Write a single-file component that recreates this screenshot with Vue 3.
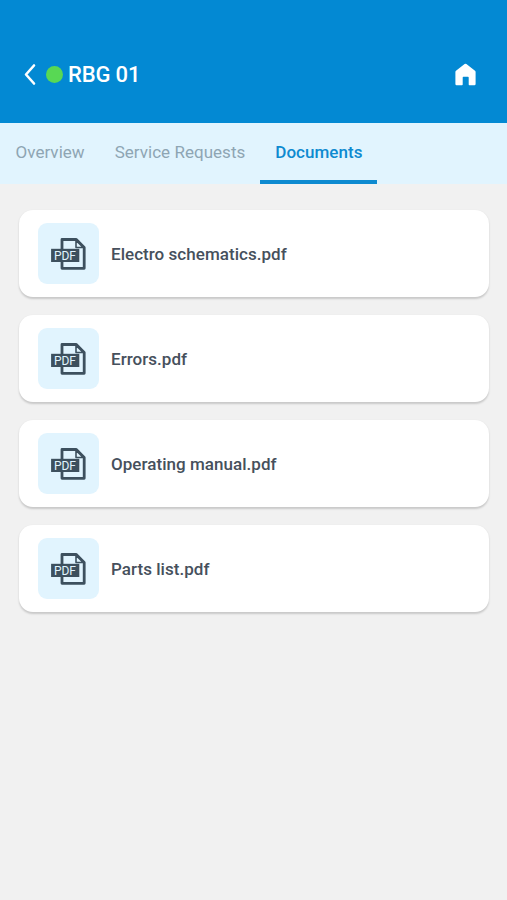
<script setup>
const tabs = [
  { label: 'Overview', active: false },
  { label: 'Service Requests', active: false },
  { label: 'Documents', active: true },
]
const documents = ['Electro schematics.pdf', 'Errors.pdf', 'Operating manual.pdf', 'Parts list.pdf']
</script>

<template>
  <div class="screen">
    <header class="header">
      <svg class="back" width="14" height="24" viewBox="0 0 14 24">
        <path d="M11 2.5L3 11.5l8 9" fill="none" stroke="#fff" stroke-width="2.6" stroke-linecap="round" stroke-linejoin="round" />
      </svg>
      <span class="status"></span>
      <h1 class="title">RBG 01</h1>
      <svg class="home" width="22" height="24" viewBox="0 0 22 24">
        <path d="M2 7.8L10.6 1q.9-.6 1.8 0L21 7.8q.6.5.6 1.3v12q0 1.2-1.2 1.2h-5q-.7 0-.7-.7v-7.2q0-.7-.7-.7H9.4q-.7 0-.7.7v7.2q0 .7-.7.7H2.6q-1.2 0-1.2-1.2v-12q0-.8.6-1.3z" fill="#fff" />
      </svg>
    </header>
    <nav class="tabs">
      <button v-for="tab in tabs" :key="tab.label" class="tab" :class="{ active: tab.active }">{{ tab.label }}</button>
    </nav>
    <main class="list">
      <article v-for="name in documents" :key="name" class="card">
        <div class="tile">
          <svg width="61" height="61" viewBox="0 0 61 61">
            <path d="M24 26.5V16.5h14.3l7.9 8v20.8H24V39" class="page" />
            <path d="M38 17.5v7h7.2z" class="fold" />
            <rect x="13.1" y="25.8" width="28.2" height="13.2" class="label" />
            <text x="15.9" y="36.7" class="pdf">PDF</text>
          </svg>
        </div>
        <span class="name">{{ name }}</span>
      </article>
    </main>
  </div>
</template>

<style>
body {
  background: #f1f1f1;
}
</style>

<style scoped>
.screen {
  min-height: 900px;
  background: #f1f1f1;
  font-family: Roboto, sans-serif;
}
.header {
  box-sizing: border-box;
  height: 123px;
  padding: 27px 31px 0 23px;
  display: flex;
  align-items: center;
  background: #0389d3;
}
.back {
  margin-right: 9px;
}
.status {
  width: 17px;
  height: 17px;
  margin-bottom: 1px;
  border-radius: 50%;
  background: #58d854;
}
.title {
  margin: 0 auto 0 5px;
  font-size: 22px;
  line-height: 26px;
  font-weight: 500;
  letter-spacing: -0.15px;
  color: #fff;
}
.tabs {
  display: flex;
  height: 61px;
  padding-left: 0.5px;
  background: #e1f4fe;
}
.tab {
  box-sizing: border-box;
  height: 61px;
  padding: 1px 15px 0;
  border: 0;
  border-bottom: 4px solid transparent;
  background: none;
  font: 400 17px/57px Roboto, sans-serif;
  letter-spacing: 0.03px;
  color: #8ea5b3;
}
.tab.active {
  font-weight: 500;
  color: #0e8ad0;
  border-bottom-color: #0e8ad0;
}
.list {
  display: flex;
  flex-direction: column;
  gap: 17.6px;
  padding: 26px 18.5px 0 19px;
}
.card {
  box-sizing: border-box;
  height: 87.4px;
  padding-left: 19px;
  display: flex;
  align-items: center;
  gap: 12px;
  border-radius: 14px;
  background: #fff;
  box-shadow: 0 1.5px 2px rgba(0, 0, 0, 0.17);
}
.tile {
  width: 61px;
  height: 61px;
  border-radius: 9px;
  background: #e1f4fe;
}
.tile svg {
  display: block;
}
.name {
  font-size: 17px;
  line-height: 22px;
  font-weight: 500;
  letter-spacing: 0.04px;
  color: #46505c;
}
.page {
  fill: none;
  stroke: #3d505e;
  stroke-width: 2.8;
  stroke-linejoin: round;
}
.fold {
  fill: #e1f4fe;
  stroke: #3d505e;
  stroke-width: 1.6;
  stroke-linejoin: round;
}
.label {
  fill: #3d505e;
}
.pdf {
  font: 400 12px Roboto, sans-serif;
  fill: #e1f4fe;
}
</style>
